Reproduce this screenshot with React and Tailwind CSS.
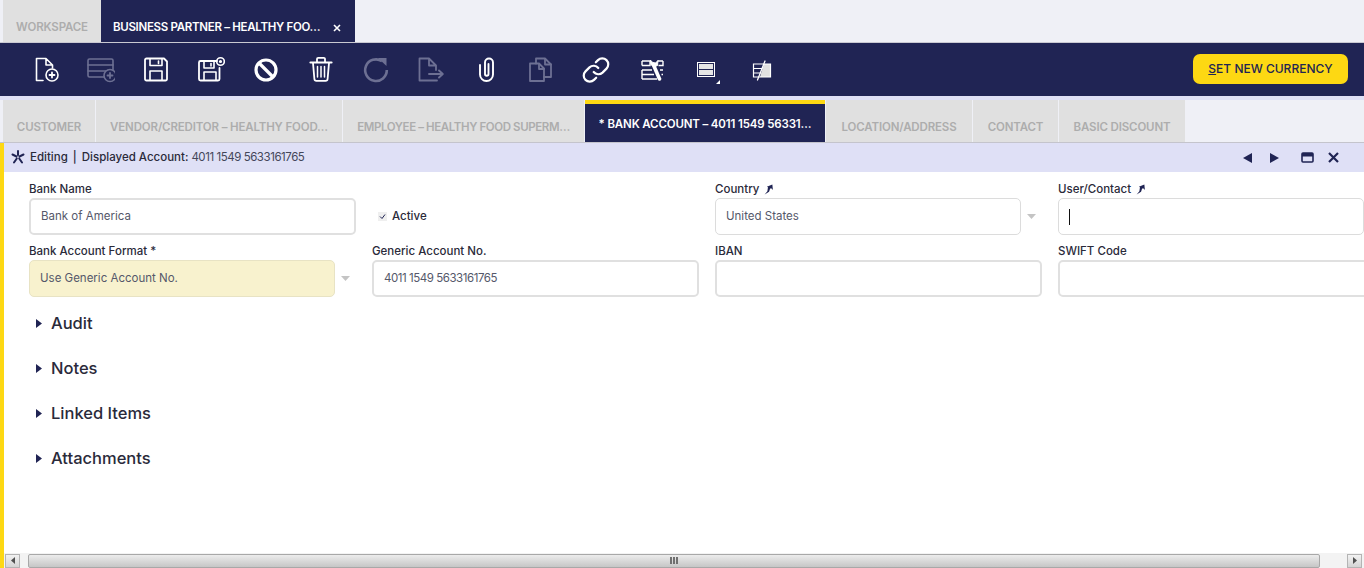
import React from 'react';

const ink = '#202454';

const Svg = ({ children, color = '#ffffff', w = 28 }) => (
    <svg width={w} height="28" viewBox={`0 0 ${w} 28`} fill="none" stroke={color} strokeWidth="1.6" strokeLinecap="round" strokeLinejoin="round">
        {children}
    </svg>
);

const PlusBadge = ({ cx, cy }) => (
    <g>
        <circle cx={cx} cy={cy} r="6" fill={ink} />
        <path d={`M${cx - 2.5} ${cy}h5M${cx} ${cy - 2.5}v5`} strokeWidth="1.8" />
    </g>
);

const icons = [
    // new record
    () => (
        <Svg>
            <path d="M11 24.5H4.5V2.5H14L20.5 9V12M14 2.5V9H20.5" />
            <PlusBadge cx={20} cy={19} />
        </Svg>
    ),
    // new in grid
    () => (
        <Svg color="#6d7093">
            <rect x="1" y="3" width="25" height="18" rx="1.5" />
            <path d="M1 9h25M1 15h25" />
            <PlusBadge cx={23} cy={19.5} />
        </Svg>
    ),
    // save
    () => (
        <Svg>
            <path d="M5.5 2.5H22L25 5.5V23a1.5 1.5 0 0 1-1.5 1.5H4.5A1.5 1.5 0 0 1 3 23V4a1.5 1.5 0 0 1 1.5-1.5Z" strokeWidth="1.8" />
            <path d="M8 3v6.5h12V3M8 24v-9h12v9M16.5 5v2.5" />
        </Svg>
    ),
    // save and new
    () => (
        <Svg>
            <path d="M20 5H3.5A1.5 1.5 0 0 0 2 6.5V23a1.5 1.5 0 0 0 1.5 1.5H21a1.5 1.5 0 0 0 1.5-1.5V12" strokeWidth="1.8" />
            <path d="M7 5.5V12h10V5.5M7 24v-8h12v8M14 7.5V10" />
            <circle cx="23.5" cy="5.5" r="3.8" />
            <circle cx="23.5" cy="5.5" r="0.8" fill="#ffffff" />
        </Svg>
    ),
    // undo
    () => (
        <Svg>
            <circle cx="14" cy="14" r="10" strokeWidth="3.2" />
            <path d="M7.5 7.5L20.5 20.5" strokeWidth="3.2" strokeLinecap="butt" />
        </Svg>
    ),
    // delete
    () => (
        <Svg>
            <path d="M3.5 6.5h21" strokeWidth="2.2" />
            <path d="M10 6V3a1.2 1.2 0 0 1 1.2-1.2h5.6A1.2 1.2 0 0 1 18 3v3" strokeWidth="1.8" />
            <path d="M6 7l1.4 16a2 2 0 0 0 2 1.8h9.2a2 2 0 0 0 2-1.8L22 7" strokeWidth="1.8" />
            <path d="M10.5 10.5v10.5M14 10.5v10.5M17.5 10.5v10.5" strokeWidth="1.5" />
        </Svg>
    ),
    // refresh
    () => (
        <Svg color="#6d7093">
            <path d="M20 5.2A10.8 10.8 0 1 0 24.8 14" strokeWidth="2.6" strokeLinecap="butt" />
            <path d="M16 2h8.5v8Z" fill="#6d7093" stroke="none" />
        </Svg>
    ),
    // export
    () => (
        <Svg color="#6d7093">
            <path d="M20 24.5H2.5V2.5H12L19 9.5V14M12 2.5V9.5H19" strokeWidth="1.8" />
            <path d="M12 18h13.5M22 14.5L25.8 18L22 21.5" strokeWidth="1.9" />
        </Svg>
    ),
    // attachment
    () => (
        <Svg>
            <path d="M8 9V18.5a6.5 6.5 0 0 0 13 0V6.5a4 4 0 0 0-8 0V18a1.75 1.75 0 0 0 3.5 0V8" strokeWidth="1.9" />
        </Svg>
    ),
    // copy
    () => (
        <Svg color="#6d7093">
            <path d="M9 7.5V2.5h9l6 6V21h-7" strokeWidth="1.8" />
            <path d="M18 3v5.5h6" strokeWidth="1.8" />
            <path d="M3 7.5h9l5 5v12.5H3Z" strokeWidth="1.8" />
            <path d="M12 8v5h5" strokeWidth="1.8" />
        </Svg>
    ),
    // link
    () => (
        <Svg>
            <path d="M11.7 16a6 6 0 0 0 8.8.6l4-4a6 6 0 0 0-8.5-8.5l-2.2 2.2" strokeWidth="2.2" />
            <path d="M16.3 12a6 6 0 0 0-8.8-.6l-4 4a6 6 0 0 0 8.5 8.5l2.2-2.2" strokeWidth="2.2" />
        </Svg>
    ),
    // tree and form tools
    () => (
        <Svg>
            <path d="M5 5h9M5 9.5h8v-4.5M5 14h10M5 18.5h12M5 23h15M20.5 5h5.5M21.5 9.5h4.5v-4.5M23 14h3M24.5 18.5h1.5" strokeWidth="1.4" strokeLinecap="butt" strokeLinejoin="miter" />
            <path d="M5 5v4.5M5 14v4.5M5 18.5v4.5" strokeWidth="1.4" strokeLinecap="butt" />
            <path d="M16.5 9L22.5 23" strokeWidth="3.6" strokeLinecap="round" />
            <path d="M13.5 4.5l.3 4 3.2 2.5 3.5-1.5.5-5-2.5 2.5-2.5-.5Z" fill="#ffffff" strokeWidth="1" />
        </Svg>
    ),
    // grid or form view
    () => (
        <div className="relative w-[28px] h-[28px] flex items-center justify-center">
            <div className="w-[18px] h-[15px] border-[1.5px] border-white flex flex-col gap-[1px] p-[1px]">
                <div className="flex-1 bg-[#e4e4e4]" />
                <div className="flex-1 bg-[#e4e4e4]" />
            </div>
            <svg className="absolute left-[24px] top-[24px]" width="4" height="4" viewBox="0 0 4 4">
                <path d="M4 0V4H0Z" fill="#ffffff" />
            </svg>
        </div>
    ),
    // quick form
    () => (
        <Svg>
            <path d="M17 8H24V21H13Z" fill="#e0e0e0" stroke="none" />
            <path d="M6.5 8h17v13h-17Z" strokeWidth="1.2" strokeLinecap="butt" strokeLinejoin="miter" />
            <path d="M6.5 12.5h9M6.5 17h8" strokeWidth="1.2" strokeLinecap="butt" />
            <path d="M18 5L10.5 24" strokeWidth="1.3" />
        </Svg>
    ),
];

const mainTabs = [
    { label: 'CUSTOMER', w: 'w-[92px]', tracking: 'tracking-[-0.15px]' },
    { label: 'VENDOR/CREDITOR – HEALTHY FOOD…', w: 'w-[246px]', tracking: 'tracking-[-0.15px]' },
    { label: 'EMPLOYEE – HEALTHY FOOD SUPERM…', w: 'w-[241px]', tracking: 'tracking-[-0.4px]' },
    { label: '* BANK ACCOUNT – 4011 1549 56331…', w: 'w-[240px]', tracking: 'tracking-[-0.15px]', active: true },
    { label: 'LOCATION/ADDRESS', w: 'w-[146px]', tracking: 'tracking-[-0.15px]' },
    { label: 'CONTACT', w: 'w-[85px]', tracking: 'tracking-[-0.15px]' },
    { label: 'BASIC DISCOUNT', w: 'w-[126px]', tracking: 'tracking-[-0.15px]' },
];

const Label = ({ children, pin }) => (
    <div className="h-[17px] flex items-center gap-[4px] text-[11.5px] leading-none font-medium text-[#2a2a3a]">
        {children}
        {pin && (
            <svg width="11" height="11" viewBox="0 0 10 10">
                <path d="M1.5 9.5L4 6.5 4.5 3 3.5 2.5 8.5 0.5 9 5.5 7.8 4.2 6.5 4.2 5.5 7Z" fill="#202454" />
            </svg>
        )}
    </div>
);

const Input = ({ value, thin, caret, digits }) => (
    <div className={`h-[37px] rounded-[5px] bg-white flex items-center px-[10px] text-[11.5px] text-[#55586a] ${thin ? 'border border-[#dcdcdc]' : 'border-2 border-[#e0e0e0]'} ${digits ? 'tracking-[-0.45px]' : ''}`}>
        {caret && <span className="block w-px h-[16px] bg-[#111111]" />}
        {value}
    </div>
);

const Arrow = () => (
    <div className="w-[21px] flex items-center justify-center">
        <svg width="9" height="5" viewBox="0 0 9 5">
            <path d="M0 0H9L4.5 5Z" fill="#c4c4c4" />
        </svg>
    </div>
);

const Section = ({ title }) => (
    <div className="h-[45px] flex items-center gap-[9px] text-[16.5px] font-medium text-[#2a2a3a]">
        <svg width="6" height="9" viewBox="0 0 6 9">
            <path d="M0 0L6 4.5L0 9Z" fill="#202454" />
        </svg>
        {title}
    </div>
);

const ScrollBtn = ({ children, className }) => (
    <div className={`w-[15px] h-[14px] border border-[#b4b4b4] bg-gradient-to-b from-[#f2f2f2] to-[#d4d4d4] flex items-center justify-center ${className}`}>
        {children}
    </div>
);

const App = () => {
    return (
        <div className="w-[1364px] h-[568px] overflow-hidden bg-white flex flex-col font-[Inter,sans-serif]">
            {/* window tabs */}
            <div className="h-[43px] bg-[#eff0f6] pl-[3px] flex border-b border-[#c9c9d2]">
                <div className="w-[98px] bg-[#e0e0e0] flex items-center justify-center text-[11.5px] tracking-[-0.15px] font-semibold text-[#adadad] pt-[13px]">WORKSPACE</div>
                <div className="w-[254px] bg-[#202454] flex items-center pl-[12px] gap-[13px] text-[11.5px] tracking-[-0.3px] font-semibold text-white pt-[13px]">
                    <span className="whitespace-nowrap">BUSINESS PARTNER – HEALTHY FOO…</span>
                    <svg width="8" height="8" viewBox="0 0 8 8" className="shrink-0">
                        <path d="M1 1L7 7M7 1L1 7" stroke="#ffffff" strokeWidth="1.6" />
                    </svg>
                </div>
            </div>

            {/* toolbar */}
            <div className="h-[53px] bg-[#202454] flex items-center pl-[18px] pr-[16px]">
                {icons.map((Icon, i) => (
                    <div key={i} className="w-[55px] h-[28px] flex items-center justify-center">
                        <Icon />
                    </div>
                ))}
                <button className="ml-auto mb-px w-[155px] h-[30px] rounded-[7px] bg-[#fdd813] text-[12px] font-medium text-[#202454]">
                    <span className="underline">S</span>ET NEW CURRENCY
                </button>
            </div>

            {/* record tabs */}
            <div className="h-[47px] bg-[#dfe0f6] pt-[4px]">
                <div className="h-[43px] bg-[#eff0f6] flex pl-[3px] gap-px border-b border-[#c4c4cc]">
                    {mainTabs.map((tab) => (
                        <div
                            key={tab.label}
                            className={`${tab.w} ${tab.tracking} flex items-center justify-center whitespace-nowrap text-[11.5px] font-semibold ${tab.active ? 'bg-[#202454] text-white border-t-4 border-[#fdd813] pt-[4px]' : 'bg-[#e0e0e0] text-[#adadad] pt-[13px]'}`}
                        >
                            {tab.label}
                        </div>
                    ))}
                </div>
            </div>

            <div className="flex-1 min-h-0 border-l-4 border-[#fdd813] flex flex-col">
                {/* status bar */}
                <div className="h-[29px] bg-[#dfe0f6] flex items-center pl-[7px] pr-[25px] text-[11.5px] text-[#2a2a3a]">
                    <svg width="14" height="14" viewBox="0 0 14 14" className="mr-[5px] -mt-[2px]">
                        <path d="M7 1V5M5.5 6.5L1.5 4.5M8.5 6.5L12.5 4.5M5.8 8.5L3 12.5M8.2 8.5L11 12.5" stroke="#202454" strokeWidth="2" strokeLinecap="round" />
                    </svg>
                    <span className="font-medium">Editing</span>
                    <span className="mx-[5px] font-medium">|</span>
                    <span className="font-medium">Displayed Account:</span>
                    <span className="ml-[3px] text-[#44475a] tracking-[-0.45px]">4011 1549 5633161765</span>
                    <div className="ml-auto flex items-center">
                        <svg width="9" height="10" viewBox="0 0 9 10">
                            <path d="M9 0V10L0 5Z" fill="#202454" />
                        </svg>
                        <svg width="9" height="10" viewBox="0 0 9 10" className="ml-[18px]">
                            <path d="M0 0V10L9 5Z" fill="#202454" />
                        </svg>
                        <svg width="13" height="11" viewBox="0 0 13 11" className="ml-[22px]">
                            <rect x="1" y="1" width="11" height="9" rx="1" fill="none" stroke="#202454" strokeWidth="1.6" />
                            <rect x="1" y="1" width="11" height="3.5" fill="#202454" />
                        </svg>
                        <svg width="11" height="11" viewBox="0 0 11 11" className="ml-[14px]">
                            <path d="M1 1L10 10M10 1L1 10" stroke="#202454" strokeWidth="2.2" />
                        </svg>
                    </div>
                </div>

                {/* form */}
                <div className="flex-1 min-h-0 overflow-hidden pl-[25px] pt-[9px]">
                    <div className="grid grid-cols-[327px_327px_327px_327px] gap-x-[16px] gap-y-[8px]">
                        <div>
                            <Label>Bank Name</Label>
                            <Input value="Bank of America" />
                        </div>
                        <div className="pt-[17px]">
                            <div className="h-[37px] flex items-center pl-[6px] gap-[5px] text-[11.5px] font-medium text-[#2a2a3a]">
                                <div className="w-[9px] h-[9px] bg-[#efefef] flex items-center justify-center">
                                    <svg width="7" height="7" viewBox="0 0 7 7">
                                        <path d="M1 3.5L3 5.5L6 1.5" fill="none" stroke="#202454" strokeWidth="1" />
                                    </svg>
                                </div>
                                Active
                            </div>
                        </div>
                        <div>
                            <Label pin>Country</Label>
                            <div className="flex">
                                <div className="w-[306px]">
                                    <Input value="United States" thin />
                                </div>
                                <Arrow />
                            </div>
                        </div>
                        <div>
                            <Label pin>User/Contact</Label>
                            <div className="w-[306px]">
                                <Input thin caret />
                            </div>
                        </div>

                        <div>
                            <Label>Bank Account Format *</Label>
                            <div className="flex">
                                <div className="w-[306px] h-[37px] rounded-[5px] bg-[#f8f2ce] border border-[#e8e3c4] flex items-center px-[10px] text-[11.5px] text-[#55586a]">
                                    Use Generic Account No.
                                </div>
                                <Arrow />
                            </div>
                        </div>
                        <div>
                            <Label>Generic Account No.</Label>
                            <Input value="4011 1549 5633161765" digits />
                        </div>
                        <div>
                            <Label>IBAN</Label>
                            <Input />
                        </div>
                        <div>
                            <Label>SWIFT Code</Label>
                            <Input />
                        </div>
                    </div>

                    <div className="mt-[4px] pl-[7px]">
                        <Section title="Audit" />
                        <Section title="Notes" />
                        <Section title="Linked Items" />
                        <Section title="Attachments" />
                    </div>
                </div>

                {/* horizontal scrollbar */}
                <div className="h-[15px] bg-[#f3f3f3] flex items-center pl-px pr-[2px]">
                    <ScrollBtn>
                        <svg width="4" height="7" viewBox="0 0 4 7">
                            <path d="M4 0V7L0 3.5Z" fill="#505050" />
                        </svg>
                    </ScrollBtn>
                    <div className="ml-[8px] w-[1292px] h-[14px] rounded-[2px] border border-[#a8a8a8] bg-gradient-to-b from-[#ececec] to-[#c6c6c6] flex items-center justify-center gap-px">
                        <div className="w-[2px] h-[7px] bg-[#707070]" />
                        <div className="w-[2px] h-[7px] bg-[#707070]" />
                        <div className="w-[2px] h-[7px] bg-[#707070]" />
                    </div>
                    <ScrollBtn className="ml-auto">
                        <svg width="4" height="7" viewBox="0 0 4 7">
                            <path d="M0 0V7L4 3.5Z" fill="#505050" />
                        </svg>
                    </ScrollBtn>
                </div>
            </div>
        </div>
    );
};

export default App;
